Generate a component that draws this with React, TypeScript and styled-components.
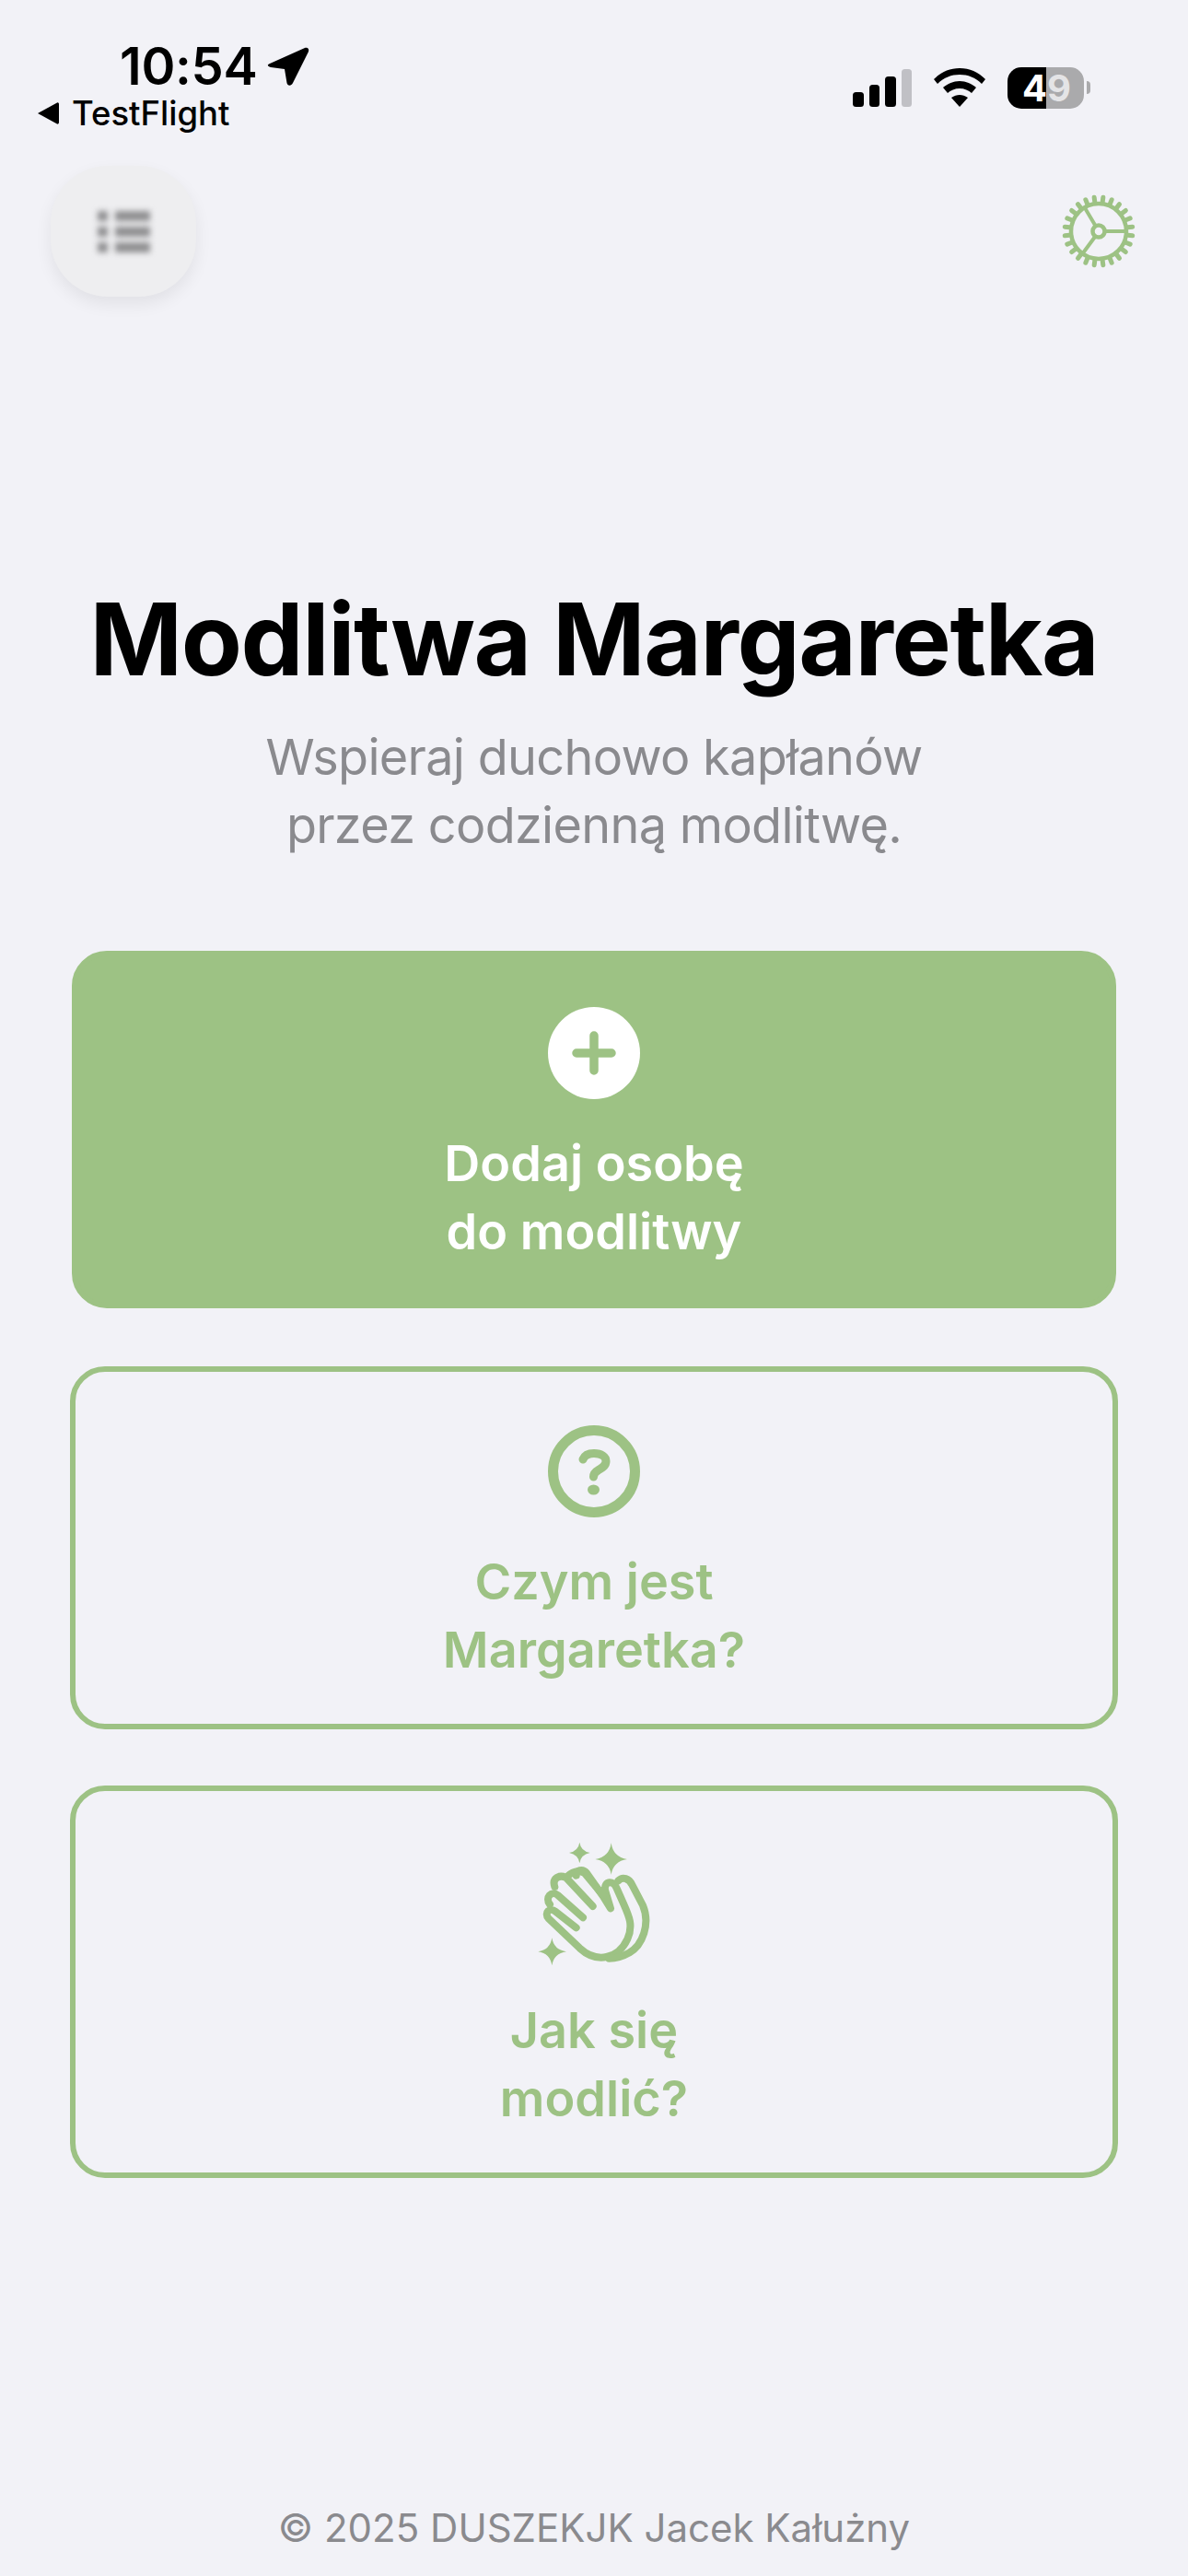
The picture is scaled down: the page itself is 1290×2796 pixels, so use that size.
import styled, { createGlobalStyle } from "styled-components";

const green = "#9dc284";

const GlobalStyle = createGlobalStyle`
  html, body {
    margin: 0;
    padding: 0;
    background: #f2f2f7;
  }
  * {
    box-sizing: border-box;
  }
`;

const teeth = Array.from({ length: 24 }, (_, i) => i * 15 + 7.5);

const GearIcon = () => (
  <svg width="80" height="80" viewBox="0 0 80 80" fill="none" stroke={green}>
    {teeth.map((deg) => (
      <line key={deg} x1="40" y1="8" x2="40" y2="3" strokeWidth="5" strokeLinecap="round" transform={`rotate(${deg} 40 40)`} />
    ))}
    <circle cx="40" cy="40" r="30" strokeWidth="4.5" />
    <circle cx="40" cy="40" r="6.5" strokeWidth="4.5" />
    <path d="M47 40H70M36.5 34L24 13M36 46L22 65" strokeWidth="4" />
  </svg>
);

const ClapIcon = () => (
  <svg width="125" height="140" viewBox="190 55 375 420" fill="none" stroke={green} strokeWidth="24" strokeLinecap="round" strokeLinejoin="round">
    <path d="M318 338L250 285C232 270 212 290 228 308L330 405C385 455 455 440 485 375C505 330 490 300 470 255L450 210C440 182 408 185 412 215L430 275L405 235L352 160C340 145 315 150 318 168" />
    <path d="M340 305L258 232C238 215 215 240 232 262" />
    <path d="M372 268L285 175C265 165 238 175 248 205" />
    <path d="M405 232L345 160C325 150 305 155 288 172" />
    <path d="M455 185C470 170 490 178 500 198L535 265C560 325 535 395 490 420C470 432 450 438 425 438" />
    <path
      stroke="none"
      fill={green}
      d="M329 60Q333 88 363 94Q333 100 329 128Q325 100 295 94Q325 88 329 60ZM432 62Q438 108 484 115Q438 122 432 166Q426 122 380 115Q426 108 432 62ZM239 371Q245 410 286 416Q245 422 239 461Q233 422 194 416Q233 410 239 371Z"
    />
  </svg>
);

const App = () => (
  <Page>
    <GlobalStyle />
    <StatusBar>
      <StatusLeft>
        <TimeRow>
          <Time>10:54</Time>
          <svg width="46" height="44" viewBox="0 0 46 44">
            <path fill="#000" d="M3 19L41 2C44 1 46 3 45 6L28 40C26 44 22 43 21.500 40L19 25L4 23C0 22 0 20 3 19Z" />
          </svg>
        </TimeRow>
        <BackRow>
          <svg width="24" height="26" viewBox="0 0 24 26">
            <path fill="#000" d="M1 13L22 1.500C23 1 24 2 24 3V23C24 24 23 25 22 24.500Z" />
          </svg>
          <BackLabel>TestFlight</BackLabel>
        </BackRow>
      </StatusLeft>
      <StatusRight>
        <SignalBars>
          <Bar $h={16} />
          <Bar $h={24} />
          <Bar $h={33} />
          <Bar $h={41} $off />
        </SignalBars>
        <svg width="56" height="42" viewBox="0 0 56 42">
          <path fill="#000" d="M28 0C17 0 8 4 0 12L4 17C11 10 19 7 28 7C37 7 45 10 52 17L56 12C48 4 39 0 28 0Z" />
          <path fill="#000" d="M28 14C21 14 15 17 10 21L15 27C18 24 23 22 28 22C33 22 38 24 41 27L46 21C41 17 35 14 28 14Z" />
          <path fill="#000" d="M28 29C25 29 22 30 19 32L28 42L37 32C34 30 31 29 28 29Z" />
        </svg>
        <Battery>
          <BatteryBody>
            <BatteryDigit>4</BatteryDigit>
            <BatteryDigit $dim>9</BatteryDigit>
          </BatteryBody>
          <BatteryCap />
        </Battery>
      </StatusRight>
    </StatusBar>

    <TopBar>
      <MenuButton>
        <MenuIcon>
          {[0, 1, 2].map((row) => (
            <MenuRow key={row}>
              <MenuDot />
              <MenuLine />
            </MenuRow>
          ))}
        </MenuIcon>
      </MenuButton>
      <GearIcon />
    </TopBar>

    <Title>Modlitwa Margaretka</Title>
    <Subtitle>
      Wspieraj duchowo kapłanów
      <br />
      przez codzienną modlitwę.
    </Subtitle>

    <Cards>
      <Card $variant="filled">
        <IconSlot>
          <svg width="100" height="100" viewBox="0 0 100 100">
            <circle cx="50" cy="50" r="50" fill="#fff" />
            <path d="M50 31V69M31 50H69" stroke={green} strokeWidth="9.500" strokeLinecap="round" />
          </svg>
        </IconSlot>
        <CardLabel>
          Dodaj osobę
          <br />
          do modlitwy
        </CardLabel>
      </Card>
      <Card $variant="outline">
        <IconSlot>
          <svg width="100" height="100" viewBox="0 0 100 100" fill="none">
            <circle cx="50" cy="50" r="44.500" stroke={green} strokeWidth="11" />
            <path d="M38 37C40 32 45 30.500 50 30.500C58 30.500 63 34 63 39C63 44 59 46 55 48.500C51.500 50.500 49.500 52.500 49.500 56" stroke={green} strokeWidth="9" strokeLinecap="round" />
            <ellipse cx="49.500" cy="70" rx="6.500" ry="5.500" fill={green} />
          </svg>
        </IconSlot>
        <CardLabel>
          Czym jest
          <br />
          Margaretka?
        </CardLabel>
      </Card>
      <Card $variant="tall">
        <IconSlot $gap={29}>
          <ClapIcon />
        </IconSlot>
        <CardLabel>
          Jak się
          <br />
          modlić?
        </CardLabel>
      </Card>
    </Cards>

    <Footer>© 2025 DUSZEKJK Jacek Kałużny</Footer>
  </Page>
);

const Page = styled.div`
  width: 1290px;
  min-height: 2796px;
  display: flex;
  flex-direction: column;
  background: #f2f2f7;
  font-family: Inter, "Noto Sans", sans-serif;
  overflow: hidden;
`;

const StatusBar = styled.div`
  display: flex;
  justify-content: space-between;
  align-items: flex-start;
  height: 180px;
  padding: 43px 106px 0 40px;
`;

const StatusLeft = styled.div`
  display: flex;
  flex-direction: column;
`;

const TimeRow = styled.div`
  display: flex;
  align-items: center;
  gap: 10px;
  margin-left: 90px;
  height: 58px;
`;

const Time = styled.span`
  font-size: 56px;
  line-height: 58px;
  font-weight: 600;
  letter-spacing: -0.3px;
  color: #000;
`;

const BackRow = styled.div`
  display: flex;
  align-items: center;
  gap: 14px;
  height: 44px;
`;

const BackLabel = styled.span`
  font-size: 36.500px;
  line-height: 44px;
  font-weight: 500;
  color: #000;
`;

const StatusRight = styled.div`
  display: flex;
  align-items: center;
  gap: 24px;
  margin-top: 29px;
  height: 46px;
`;

const SignalBars = styled.div`
  display: flex;
  align-items: flex-end;
  gap: 6px;
  height: 41px;
`;

const Bar = styled.div<{ $h: number; $off?: boolean }>`
  width: 11.500px;
  height: ${({ $h }) => $h}px;
  border-radius: 3.500px;
  background: ${({ $off }) => ($off ? "#c0c0c5" : "#000")};
`;

const Battery = styled.div`
  display: flex;
  align-items: center;
  gap: 3px;
`;

const BatteryBody = styled.div`
  display: flex;
  width: 83px;
  height: 45px;
  padding: 0 16px;
  border-radius: 15px;
  background: linear-gradient(90deg, #000 50%, #aaaaac 50%);
`;

const BatteryDigit = styled.span<{ $dim?: boolean }>`
  flex: 1;
  text-align: center;
  font-size: 40px;
  line-height: 45px;
  font-weight: 700;
  color: ${({ $dim }) => ($dim ? "#e4e4e6" : "#fff")};
`;

const BatteryCap = styled.div`
  width: 4px;
  height: 14px;
  border-radius: 0 4px 4px 0;
  background: #aaaaac;
`;

const TopBar = styled.div`
  display: flex;
  justify-content: space-between;
  align-items: center;
  height: 142px;
  padding: 0 57px 0 55px;
`;

const MenuButton = styled.div`
  display: flex;
  align-items: center;
  justify-content: center;
  width: 158px;
  height: 142px;
  border-radius: 62px;
  background: #eeeef0;
  box-shadow: 0 8px 18px rgba(0, 0, 0, 0.07);
`;

const MenuIcon = styled.div`
  display: flex;
  flex-direction: column;
  gap: 6px;
  filter: blur(3px);
`;

const MenuRow = styled.div`
  display: flex;
  gap: 8px;
`;

const MenuDot = styled.div`
  width: 11px;
  height: 11px;
  background: #8f8f91;
`;

const MenuLine = styled.div`
  width: 38px;
  height: 11px;
  background: #8f8f91;
`;

const Title = styled.h1`
  margin: 304px 0 0;
  text-align: center;
  font-size: 108px;
  line-height: 136px;
  font-weight: 700;
  letter-spacing: -1.4px;
  white-space: nowrap;
  color: #000;
`;

const Subtitle = styled.p`
  margin: 23px 0 0;
  text-align: center;
  font-size: 54px;
  line-height: 74px;
  font-weight: 400;
  letter-spacing: -0.7px;
  color: #8a8a8e;
`;

const cardVariants = {
  filled: `
    margin: 0 2px 2px;
    padding: 55px 0 40px;
    background: ${green};
    color: #fff;
  `,
  outline: `
    padding: 58px 0 43px;
    color: ${green};
  `,
  tall: `
    padding: 54px 0 43px;
    color: ${green};
  `,
};

const Cards = styled.div`
  display: flex;
  flex-direction: column;
  gap: 61px;
  margin-top: 99px;
  padding: 0 76px;
`;

const Card = styled.div<{ $variant: keyof typeof cardVariants }>`
  display: flex;
  flex-direction: column;
  align-items: center;
  border: 6px solid ${green};
  border-radius: 38px;
  ${({ $variant }) => cardVariants[$variant]}
`;

const IconSlot = styled.div<{ $gap?: number }>`
  display: flex;
  justify-content: center;
  margin-bottom: ${({ $gap }) => $gap ?? 33}px;
`;

const CardLabel = styled.div`
  text-align: center;
  font-size: 54px;
  line-height: 74px;
  font-weight: 600;
`;

const Footer = styled.div`
  margin-top: auto;
  padding-bottom: 26px;
  text-align: center;
  font-size: 42px;
  line-height: 52px;
  color: #8a8a8e;
`;

export default App;
